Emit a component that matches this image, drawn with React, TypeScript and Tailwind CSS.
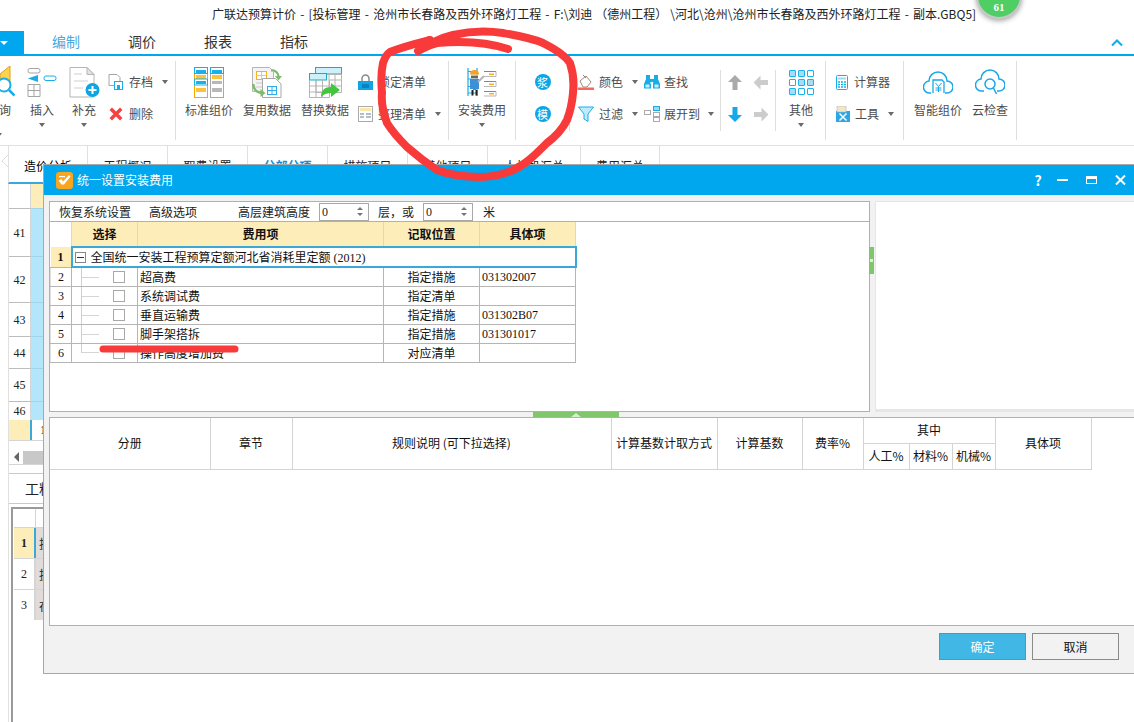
const SANS = "font-['Noto_Sans_CJK_SC',sans-serif]";

function Caret({ className = "" }: { className?: string }) {
  return <span className={`inline-block w-0 h-0 border-x-[3.500px] border-x-transparent border-t-[4px] border-t-[#6a6a6a] ${className}`} />;
}

function BigButton({ label, icon, caret, className = "" }: { label: string; icon: React.ReactNode; caret?: boolean; className?: string }) {
  return (
    <div className={`flex flex-col items-center shrink-0 pt-[9px] ${className}`}>
      <div className="h-[34px] flex items-center justify-center">{icon}</div>
      <div className="mt-[3px] h-[16px] leading-[16px] text-[12px] text-[#4d4d4d] whitespace-nowrap">{label}</div>
      {caret && <Caret className="mt-[5px]" />}
    </div>
  );
}

function SmallButton({ label, icon, caret, gap = "gap-[5px]" }: { label: string; icon: React.ReactNode; caret?: boolean; gap?: string }) {
  return (
    <div className={`h-[20px] flex items-center whitespace-nowrap text-[12px] text-[#4d4d4d] ${gap}`}>
      {icon}
      <span>{label}</span>
      {caret && <Caret className="ml-[4px]" />}
    </div>
  );
}

function Column({ className = "", children }: { className?: string; children: React.ReactNode }) {
  return <div className={`flex flex-col gap-[12px] pt-[16px] shrink-0 ${className}`}>{children}</div>;
}

function Sep({ short }: { short?: boolean }) {
  return <div className={`w-px shrink-0 bg-[#dedede] ${short ? "mt-[14px] h-[61px]" : "mt-[5px] h-[79px]"}`} />;
}

const StandardIcon = (
  <svg width="30" height="31" viewBox="0 0 30 31" fill="none">
    <rect x=".5" y=".5" width="13" height="30" fill="#fff" stroke="#f5a800" />
    <rect x=".5" y=".5" width="13" height="6" fill="#fff" stroke="#16b1e8" />
    <rect x="2" y="3" width="10" height="3" fill="#16b1e8" />
    <rect x="2" y="8" width="10" height="4" fill="#fbc23c" />
    <rect x=".5" y="12" width="13" height="6" fill="#fff" stroke="#16b1e8" />
    <rect x="2" y="14" width="10" height="3" fill="#16b1e8" />
    <rect x="2" y="21" width="10" height="4" fill="#fbc23c" />
    <rect x="16.5" y=".5" width="13" height="30" fill="#fff" stroke="#a8a8a8" />
    <rect x="16.5" y=".5" width="13" height="6" fill="#fff" stroke="#16b1e8" />
    <rect x="18" y="3" width="10" height="3" fill="#16b1e8" />
    <rect x="18" y="8" width="10" height="4" fill="#fbc23c" />
    <rect x="18" y="14" width="10" height="3" fill="#b8b8b8" />
    <rect x="18" y="21" width="10" height="4" fill="#b8b8b8" />
  </svg>
);

const ReuseIcon = (
  <svg width="30" height="31" viewBox="0 0 30 31" fill="none">
    <path d="M.5.5h17l4 4v20H.5z" fill="#f4f4f4" stroke="#b5b5b5" />
    <rect x="4.5" y="4.5" width="10" height="8" fill="#fff" stroke="#f5b21c" />
    <path d="M9.5 4.5v8M4.5 8.5h10M4 16h10M4 20h10" stroke="#c9c9c9" />
    <path d="M10.500 11.500h13l5.500 5.500v13.500H10.500z" fill="#fff" stroke="#a8a8a8" />
    <rect x="15.500" y="19.500" width="9" height="8" fill="#fff" stroke="#2eaee8" />
    <path d="M20 19.500v8M15.500 23.500h9" stroke="#2eaee8" />
    <path d="M20 2c5 0 8 3 8.500 7H31l-3.500 4.500L24 9h2.300C26 6.500 24 4.500 20 4.500z" fill="#7dbd6a" transform="translate(-1,0)" />
    <path d="M0 17h2.500c.5 5 3 7 6 7.500V22l5 4-5 4v-3C4 26.500.5 23 0 17z" fill="#7dbd6a" />
  </svg>
);

const ReplaceIcon = (
  <svg width="33" height="31" viewBox="0 0 33 31" fill="none">
    <rect x="6.500" y=".5" width="26" height="6.500" fill="#cdf1fa" stroke="#17aec3" />
    <path d="M7 7.500h25.500v18H7z" fill="#fff" stroke="#b5b5b5" />
    <rect x=".5" y="6.500" width="17" height="6.500" fill="#cdf1fa" stroke="#17aec3" />
    <path d="M.5 13v17.500h20V13M7 13v17M13.500 13v17M.5 19h20M.5 25h20M20 7v18M26 7v18M20 13h12M20 19h12" stroke="#b5b5b5" />
    <path d="M12 30c0-7 4-10 10-10v-4l9 7-9 7v-4c-4 0-7 1-10 4z" fill="#43c63c" />
  </svg>
);

const WorkerIcon = (
  <svg width="30" height="29" viewBox="0 0 30 29" fill="none">
    <path d="M1 0v28M10 0v28M1 3.500h9M1 11h9M1 18.500h9M1 25h9" stroke="#17aee8" strokeWidth="1.200" />
    <path d="M17 3h12v1H17zM17 13h12v1H17zM17 23h12v1H17z" fill="#17aee8" />
    <path d="M17 8.500h12V3.500M17 18.500h12V13.500M17 28h12V23.500" stroke="#b8b8b8" />
    <path d="M22 5.500h5v1.500h-5zM22 15.500h5v1.500h-5zM22 25h5v1.500h-5z" fill="#f5b21c" />
    <path d="M3 6.500C3 3 5 2 7.500 2S12 3 12 6.500z" fill="#f5a321" />
    <rect x="4" y="6.500" width="7" height="4" fill="#e0b090" />
    <rect x="4" y="8" width="7" height="2" fill="#666" />
    <path d="M3 11h9v10H9v1H6v-1H3z" fill="#3d90d8" />
    <rect x="4.500" y="22" width="2" height="5.500" fill="#222" />
    <rect x="8.500" y="22" width="2" height="5.500" fill="#222" />
    <path d="M11 14l6-6" stroke="#b5b5b5" strokeWidth="2" />
  </svg>
);

const GridIcon = (
  <div className="grid grid-cols-3 gap-[2px] w-[25px]">
    {Array.from({ length: 9 }).map((_, i) => (
      <div key={i} className={`h-[7px] rounded-[1px] border border-[#18b2ee] ${[0, 1, 4, 5, 6].includes(i) ? "bg-[#a8dcf5]" : "bg-white"}`} />
    ))}
  </div>
);

function Arrow({ dir, color }: { dir: "up" | "down" | "left" | "right"; color: string }) {
  const rot = { up: 0, right: 90, down: 180, left: 270 }[dir];
  return (
    <svg width="14" height="15" viewBox="0 0 14 15">
      <path d="M7 0l7 7H9.500v8h-5V7H0z" fill={color} transform={`rotate(${rot} 7 7.500)`} />
    </svg>
  );
}

function Ribbon() {
  return (
    <div className="h-[90px] flex border-b border-b-[#e0e0e0] overflow-hidden">
      {/* first group is cut off at the window edge */}
      <div className="w-[15px] shrink-0 overflow-hidden relative pt-[9px]">
        <svg width="16" height="34" viewBox="0 0 16 34" fill="none">
          <path d="M0 9L10 1v16H0z" fill="#ffd24d" stroke="#d7a21e" />
          <circle cx="4" cy="20" r="6.500" fill="#fff" stroke="#17aee8" strokeWidth="2" />
          <path d="M9 25l5.500 5.500" stroke="#17aee8" strokeWidth="2.500" />
        </svg>
        <div className="mt-[3px] h-[16px] leading-[16px] text-[12px] text-[#4d4d4d] -ml-[1px]">询</div>
        <Caret className="mt-[5px] -ml-[4px] block" />
      </div>
      <BigButton
        className="w-[32px] ml-[11px]"
        label="插入"
        caret
        icon={
          <svg width="30" height="29" viewBox="0 0 30 29" fill="none">
            <rect x="1" y=".5" width="12" height="4.500" rx="2" stroke="#a5a5a5" />
            <path d="M4 10.500h6v-2l-6 2 6 2v-2" stroke="#17aee8" strokeWidth="2" />
            <rect x="17" y="8" width="12" height="4.500" rx="2" fill="#fff" stroke="#17aee8" />
            <path d="M1 16.500h12v12H1zM1 22.500h12M7 16.500v12" stroke="#a5a5a5" />
          </svg>
        }
      />
      <BigButton
        className="w-[36px] ml-[8px]"
        label="补充"
        caret
        icon={
          <svg width="31" height="31" viewBox="0 0 31 31" fill="none">
            <path d="M1 .5h17l7 7v22.500H1z" fill="#fff" stroke="#b5b5b5" />
            <path d="M18 .5v7h7z" fill="#e2e2e2" stroke="#b5b5b5" />
            <path d="M5 7h8M5 14h14M5 21h9" stroke="#e0e0e0" strokeWidth="1.500" />
            <circle cx="23.500" cy="23" r="7" fill="#0ea5e4" />
            <path d="M23.500 19v8M19.500 23h8" stroke="#fff" strokeWidth="2" />
          </svg>
        }
      />
      <Column className="w-[67px] ml-[6px]">
        <SmallButton
          label="存档"
          caret
          icon={
            <svg width="16" height="16" viewBox="0 0 16 16" fill="none">
              <path d="M1 .5h8l3 3v8H1z" stroke="#a5a5a5" fill="#fff" />
              <rect x="6.500" y="7.500" width="8" height="8" fill="#fff" stroke="#17aee8" />
              <rect x="9" y="11" width="3" height="4" fill="#17aee8" />
            </svg>
          }
        />
        <SmallButton
          label="删除"
          icon={
            <svg width="16" height="14" viewBox="0 0 12 12">
              <path d="M1.500 1.500l9 9M10.500 1.500l-9 9" stroke="#f44242" strokeWidth="3" />
            </svg>
          }
        />
      </Column>
      <Sep />
      <BigButton className="w-[48px] ml-[9px]" label="标准组价" icon={StandardIcon} />
      <BigButton className="w-[48px] ml-[10px]" label="复用数据" icon={ReuseIcon} />
      <BigButton className="w-[48px] ml-[10px]" label="替换数据" icon={ReplaceIcon} />
      <Column className="w-[90px] ml-[9px]">
        <SmallButton
          label="锁定清单"
          icon={
            <svg width="15" height="17" viewBox="0 0 15 17" fill="none">
              <path d="M4 7V4.500a3.500 3.500 0 017 0V7" stroke="#8a8a8a" strokeWidth="1.500" />
              <rect y="7" width="15" height="9" fill="#0ea5e4" />
              <path d="M4 11h7M4 13h7" stroke="#075f9a" />
            </svg>
          }
        />
        <SmallButton
          label="整理清单"
          caret
          icon={
            <svg width="15" height="16" viewBox="0 0 15 16" fill="none">
              <rect x=".5" y=".5" width="14" height="15" fill="#fff" stroke="#aaa" />
              <rect x="2" y="2" width="11" height="3" fill="#fde7a8" />
              <path d="M2 8h4M2 11h4M8 8h5M8 11h5" stroke="#9ab" strokeWidth="1.500" />
            </svg>
          }
        />
      </Column>
      <Sep />
      <BigButton className="w-[66px]" label="安装费用" caret icon={WorkerIcon} />
      <Sep />
      <Column className="w-[53px] items-center">
        <div className="h-[20px] flex items-center">
          <div className="size-[16px] rounded-full bg-[#0ea5e4] text-white text-[11px] leading-[16px] text-center">浆</div>
        </div>
        <div className="h-[20px] flex items-center">
          <div className="size-[16px] rounded-full bg-[#0ea5e4] text-white text-[11px] leading-[16px] text-center">模</div>
        </div>
      </Column>
      <Sep short />
      <Column className="w-[66px] ml-[8px]">
        <SmallButton
          label="颜色"
          caret
          icon={
            <svg width="16" height="16" viewBox="0 0 16 16" fill="none">
              <path d="M2 7l6-5 5 6-4 5H5z" fill="#fff" stroke="#a08a78" />
              <path d="M5 1l3 3" stroke="#a08a78" />
              <rect y="13.500" width="16" height="2.500" fill="#f5685c" />
            </svg>
          }
        />
        <SmallButton
          label="过滤"
          caret
          icon={
            <svg width="16" height="16" viewBox="0 0 16 16" fill="none">
              <path d="M.5 1h15L10 8v7.500L6 13V8z" fill="#bfeafb" stroke="#17aee8" />
            </svg>
          }
        />
      </Column>
      <Column className="w-[76px]">
        <SmallButton
          label="查找"
          gap="gap-[4px]"
          icon={
            <svg width="16" height="14" viewBox="0 0 16 14" fill="#17aee8">
              <rect x="2" width="4" height="4" />
              <rect x="10" width="4" height="4" />
              <rect x="6" y="4" width="4" height="3" />
              <path d="M2 4h4.500v5H7v4.500H0V9z" />
              <path d="M9.500 4H14l2 5v4.500H9V9z" />
              <rect x="1.500" y="9.500" width="4" height="3" fill="#c8eefc" />
              <rect x="10.500" y="9.500" width="4" height="3" fill="#c8eefc" />
            </svg>
          }
        />
        <SmallButton
          label="展开到"
          gap="gap-[4px]"
          caret
          icon={
            <svg width="16" height="16" viewBox="0 0 16 16" fill="none">
              <rect x=".5" y="4.500" width="6" height="4" stroke="#aaa" />
              <rect x="9.500" y=".5" width="6" height="4" fill="#9fd8f2" stroke="#17aee8" />
              <rect x="9.500" y="6.500" width="6" height="4" stroke="#aaa" />
              <rect x="9.500" y="11.500" width="6" height="4" stroke="#aaa" />
            </svg>
          }
        />
      </Column>
      <Sep short />
      <div className="w-[54px] shrink-0 pt-[16px] pl-[7px] grid grid-cols-[26px_14px] grid-rows-[20px_20px] gap-y-[12px] content-start items-center">
        <Arrow dir="up" color="#aaaaaa" />
        <Arrow dir="left" color="#cccccc" />
        <Arrow dir="down" color="#14a9ea" />
        <Arrow dir="right" color="#cccccc" />
      </div>
      <Sep short />
      <BigButton className="w-[49px] pl-[1px]" label="其他" caret icon={GridIcon} />
      <Sep />
      <Column className="w-[77px] pl-[10px]">
        <SmallButton
          label="计算器"
          gap="gap-[6px]"
          icon={
            <svg width="12" height="15" viewBox="0 0 12 15" fill="none">
              <rect x=".5" y=".5" width="11" height="14" rx="1" stroke="#17aee8" />
              <rect x="2" y="2.500" width="8" height="2" fill="#9fd8f2" />
              <path d="M2 7h2M5 7h2M8 7h2M2 9.500h2M5 9.500h2M8 9.500h2M2 12h2M5 12h2M8 12h2" stroke="#17aee8" strokeWidth="1.300" />
            </svg>
          }
        />
        <SmallButton
          label="工具"
          caret
          gap="gap-[5px]"
          icon={
            <svg width="14" height="16" viewBox="0 0 14 16">
              <rect y="5" width="14" height="11" fill="#2ba7e4" />
              <rect x="1" width="9" height="6" fill="#f2e6c8" stroke="#b5b5b5" strokeWidth=".6" />
              <path d="M3.500 7.500l7 7M10.500 7.500l-7 7" stroke="#fff" strokeWidth="1.500" />
            </svg>
          }
        />
      </Column>
      <Sep />
      <BigButton
        className="w-[48px] ml-[10px]"
        label="智能组价"
        icon={
          <svg width="30" height="26" viewBox="0 0 30 26" fill="none">
            <path d="M8 24H7a6 6 0 01-1-12 9 9 0 0118 0 6 6 0 010 12h-2" stroke="#18a8e8" strokeWidth="1.500" />
            <path d="M10 24V11h9l2 2v11" stroke="#18a8e8" strokeWidth="1.300" />
            <path d="M12.500 14l3 3.500 3-3.500M15.500 17.500V23M12.500 19h6M12.500 21h6" stroke="#18a8e8" />
          </svg>
        }
      />
      <BigButton
        className="w-[36px] ml-[10px]"
        label="云检查"
        icon={
          <svg width="30" height="26" viewBox="0 0 30 26" fill="none">
            <path d="M9 22H7a6 6 0 01-1-12 9 9 0 0118 0 6 6 0 010 12h-2" stroke="#18a8e8" strokeWidth="1.500" />
            <circle cx="15" cy="15" r="5" stroke="#18a8e8" strokeWidth="1.500" />
            <path d="M18.500 19l3 6" stroke="#18a8e8" strokeWidth="1.500" />
          </svg>
        }
      />
      <div className="ml-[8px]"><Sep /></div>
    </div>
  );
}

function PageTabs() {
  const tabs = [
    { label: "工程概况", w: "w-[80px]" },
    { label: "取费设置", w: "w-[80px]" },
    { label: "分部分项", w: "w-[80px]", active: true },
    { label: "措施项目", w: "w-[80px]" },
    { label: "其他项目", w: "w-[80px]" },
    { label: "人材机汇总", w: "w-[93px]" },
    { label: "费用汇总", w: "w-[79px]" },
  ];
  return (
    <div className="h-[38px] flex">
      <svg className="shrink-0" width="8" height="38" viewBox="0 0 8 38" fill="none">
        <path d="M8 9L2 15l6 6" stroke="#dedede" />
      </svg>
      <div className="w-[80px] shrink-0 h-[38px] border-l border-l-[#e0e0e0] border-b-2 border-b-[#3aa9d9] border-r border-r-[#e0e0e0] pl-[15px] pt-[11px] text-[12px] leading-[18px] text-black">造价分析</div>
      {tabs.map((t) => (
        <div key={t.label} className={`${t.w} shrink-0 h-[36px] border-r border-r-[#e0e0e0] pt-[11px] text-center text-[12px] leading-[18px] ${t.active ? "text-[#0f8fe0] font-bold" : "text-[#222]"}`}>
          {t.label}
        </div>
      ))}
    </div>
  );
}

function LeftPane() {
  const rows = [
    { n: "41", h: "h-[48px]" },
    { n: "42", h: "h-[46px]" },
    { n: "43", h: "h-[34px]" },
    { n: "44", h: "h-[32px]" },
    { n: "45", h: "h-[33px]" },
    { n: "46", h: "h-[19px]" },
  ];
  const lower = [
    { n: "1", ch: "投", active: true },
    { n: "2", ch: "投" },
    { n: "3", ch: "在" },
  ];
  return (
    <div className="ml-[8px] w-[200px] border-l border-l-[#e0e0e0] font-['Liberation_Serif',serif] text-[12px] text-[#222]">
      <div className="h-[24px] flex">
        <div className="w-[22px] border-r border-r-[#d5d5d5]" />
        <div className="w-[20px] bg-[#fdeeb9]" />
      </div>
      {rows.map((r) => (
        <div key={r.n} className={`${r.h} flex`}>
          <div className="w-[22px] border-t border-t-[#bdbdbd] border-r border-r-[#d5d5d5] flex items-center justify-center">{r.n}</div>
          <div className="w-[20px] bg-[#b3e5fb] border-t border-t-[#9fd4ea]" />
        </div>
      ))}
      <div className="h-[20px] flex">
        <div className="w-[21px] bg-[#fdeeb9]" />
        <div className="w-[2px] bg-[#3aa9d9]" />
        <div className="pl-[8px] leading-[20px]">1</div>
      </div>
      <div className="h-[10px] border-t border-t-[#d5d5d5]" />
      <div className="h-[15px] flex items-center border-b border-b-[#d5d5d5]">
        <div className="w-[14px] h-[14px] flex items-center justify-center">
          <span className="w-0 h-0 border-y-[5px] border-y-transparent border-r-[5px] border-r-[#666]" />
        </div>
        <div className="flex-1 h-[13px] bg-[#c8c8c8]" />
      </div>
      <div className="mt-[8px] h-[31px] border-y border-y-[#b7d9a5] pl-[16px] leading-[29px] text-[14px] text-[#222] font-['Noto_Sans_CJK_SC',sans-serif]">工料</div>
      <div className="ml-[2px] mt-[3px] h-[222px] border-l-2 border-t-2 border-[#9a9a9a] pl-px">
        <div className="h-[18px] w-[22px] border-r border-r-[#d5d5d5]" />
        {lower.map((r) => (
          <div key={r.n} className="h-[31px] flex border-t border-t-[#d5d5d5]">
            <div className={`w-[20px] flex items-center justify-center ${r.active ? "bg-[#fdeeb9] font-bold" : ""}`}>{r.n}</div>
            <div className={`w-[2px] ${r.active ? "bg-[#3aa9d9]" : "bg-[#d5d5d5]"}`} />
            <div className="flex-1 bg-[#e1dcda] pl-[3px] leading-[31px] font-['Noto_Sans_CJK_SC',sans-serif]">{r.ch}</div>
          </div>
        ))}
      </div>
    </div>
  );
}

function Spin() {
  return (
    <div className="w-[50px] h-[18px] bg-white border border-[#a8a8a8] flex items-center justify-between pl-[2px] pr-[5px] font-['Liberation_Serif',serif] text-[12px] text-[#222]">
      <span>0</span>
      <span className="flex flex-col gap-[3px]">
        <span className="w-0 h-0 border-x-[3px] border-x-transparent border-b-[3px] border-b-[#777]" />
        <span className="w-0 h-0 border-x-[3px] border-x-transparent border-t-[3px] border-t-[#777]" />
      </span>
    </div>
  );
}

function FeeRow({ n, name, pos, code, last }: { n: string; name: string; pos: string; code?: string; last?: boolean }) {
  return (
    <tr className="h-[19px]">
      <td className="border border-[#b5b5b5] border-l-[#e0e0e0] bg-white text-center font-['Liberation_Serif',serif]">{n}</td>
      <td className="border border-[#b5b5b5] border-x-[#b5b5b5] p-0">
        <div className="flex items-center h-[18px]">
          <div className={`ml-[9px] w-[18px] border-l border-l-[#cfcfcf] flex items-center ${last ? "h-[9px] self-start" : "h-[18px]"}`}>
            <div className={`w-full h-px bg-[#d5d5d5] ${last ? "mt-[8px]" : ""}`} />
          </div>
          <div className="ml-[14px] size-[12px] border border-[#a8a8a8] bg-white" />
        </div>
      </td>
      <td className="border border-[#b5b5b5] pl-[2px]">{name}</td>
      <td className="border border-[#b5b5b5] text-center">{pos}</td>
      <td className="border border-[#b5b5b5] pl-[2px] font-['Liberation_Serif',serif]">{code}</td>
    </tr>
  );
}

function UpperTable() {
  const head = "border-r border-r-[#d8d8d8] bg-[#fdeeb9] font-bold text-center";
  return (
    <table className="table-fixed border-collapse w-[525px] text-[12px] text-[#111] leading-[16px]">
      <colgroup>
        <col className="w-[21px]" />
        <col className="w-[66px]" />
        <col className="w-[246px]" />
        <col className="w-[96px]" />
        <col className="w-[96px]" />
      </colgroup>
      <tbody>
        <tr className="h-[25px]">
          <td className="border-r border-r-[#d8d8d8]" />
          <td className={head}>选择</td>
          <td className={head}>费用项</td>
          <td className={head}>记取位置</td>
          <td className={head}>具体项</td>
        </tr>
        <tr className="h-[20px]">
          <td className="bg-[#fdeeb9] text-center font-bold font-['Liberation_Serif',serif]">1</td>
          <td colSpan={4} className="border-2 border-[#3aa9d9] p-0">
            <div className="flex items-center h-[16px]">
              <div className="ml-[2px] size-[11px] border border-[#888] flex items-center justify-center">
                <div className="w-[7px] h-px bg-[#333]" />
              </div>
              <span className="ml-[5px]">全国统一安装工程预算定额河北省消耗里定额<span className="font-['Liberation_Serif',serif]"> (2012)</span></span>
            </div>
          </td>
        </tr>
        <FeeRow n="2" name="超高费" pos="指定措施" code="031302007" />
        <FeeRow n="3" name="系统调试费" pos="指定清单" />
        <FeeRow n="4" name="垂直运输费" pos="指定措施" code="031302B07" />
        <FeeRow n="5" name="脚手架搭拆" pos="指定措施" code="031301017" />
        <FeeRow n="6" name="操作高度增加费" pos="对应清单" last />
      </tbody>
    </table>
  );
}

function LowerTable() {
  const c = "border border-[#d4d4d4] text-center";
  return (
    <table className="table-fixed border-collapse w-[1041px] text-[12px] text-[#111] leading-[16px]">
      <colgroup>
        <col className="w-[160px]" />
        <col className="w-[82px]" />
        <col className="w-[319px]" />
        <col className="w-[106px]" />
        <col className="w-[85px]" />
        <col className="w-[61px]" />
        <col className="w-[46px]" />
        <col className="w-[43px]" />
        <col className="w-[43px]" />
        <col className="w-[96px]" />
      </colgroup>
      <tbody>
        <tr className="h-[25px]">
          <td rowSpan={2} className={`${c} border-l-0 border-t-0`}>分册</td>
          <td rowSpan={2} className={`${c} border-t-0`}>章节</td>
          <td rowSpan={2} className={`${c} border-t-0`}>规则说明 (可下拉选择)</td>
          <td rowSpan={2} className={`${c} border-t-0`}>计算基数计取方式</td>
          <td rowSpan={2} className={`${c} border-t-0`}>计算基数</td>
          <td rowSpan={2} className={`${c} border-t-0`}>费率%</td>
          <td colSpan={3} className={`${c} border-t-0`}>其中</td>
          <td rowSpan={2} className={`${c} border-t-0`}>具体项</td>
        </tr>
        <tr className="h-[26px]">
          <td className={c}>人工%</td>
          <td className={c}>材料%</td>
          <td className={c}>机械%</td>
        </tr>
      </tbody>
    </table>
  );
}

function InstallDialog() {
  return (
    <div className="absolute left-[43px] top-[164px] w-[1100px] h-[510px] z-10 border border-[#a8a8a8] bg-[#f2f2f2] flex flex-col">
      <div className="h-[30px] shrink-0 bg-[#00a7ee] flex items-center text-white text-[12px]">
        <svg className="ml-[12px]" width="17" height="17" viewBox="0 0 17 17">
          <rect width="17" height="17" rx="3" fill="#f8a51f" />
          <path d="M2.500 8.500l3-1.500 1.500 2.500 6-6.500 1.500 1.500-6.500 8H5.500zM3 4h6v1.200H3z" fill="#fff" />
        </svg>
        <span className="ml-[4px]">统一设置安装费用</span>
        <div className="ml-[859px] flex items-center">
          <span className="w-[12px] text-center text-[14px] font-bold leading-none">?</span>
          <span className="ml-[13px] w-[11px] h-[2px] bg-white" />
          <span className="ml-[18px] w-[11px] h-[8px] border border-white border-t-[3px]" />
          <svg className="ml-[18px]" width="11" height="10" viewBox="0 0 11 10">
            <path d="M1 .5l9 9M10 .5l-9 9" stroke="#fff" strokeWidth="2" />
          </svg>
        </div>
      </div>
      <div className="flex h-[211px] shrink-0 mt-[6px] ml-[5px]">
        <div className="w-[821px] shrink-0 border border-[#b0b0b0] bg-white">
          <div className="h-[20px] flex items-center text-[12px] text-[#222] border-b border-b-[#b0b0b0]">
            <span className="ml-[9px]">恢复系统设置</span>
            <span className="ml-[18px]">高级选项</span>
            <span className="ml-[41px]">高层建筑高度</span>
            <div className="ml-[9px]"><Spin /></div>
            <span className="ml-[9px]">层，或</span>
            <div className="ml-[9px]"><Spin /></div>
            <span className="ml-[10px]">米</span>
          </div>
          <UpperTable />
        </div>
        <div className="w-[5px] shrink-0 flex items-start pt-[46px] -ml-px">
          <div className="w-[5px] h-[27px] bg-[#7fc66c] flex items-center justify-center">
            <span className="size-[3px] bg-[#dff2da]" />
          </div>
        </div>
        <div className="flex-1 ml-px bg-white border-l border-t border-[#e6e6e6] border-b-[3px]" />
      </div>
      <div className="h-[5px] shrink-0 ml-[489px] w-[86px] bg-[#7fc66c] flex justify-center items-center">
        <span className="w-0 h-0 border-x-[5px] border-x-transparent border-b-[4px] border-b-[#d5efd0]" />
      </div>
      <div className="h-[209px] shrink-0 ml-[5px] border border-[#b0b0b0] bg-white">
        <LowerTable />
      </div>
      <div className="flex ml-[895px] mt-[7px] gap-[6px] text-[12px]">
        <div className="w-[87px] h-[27px] bg-[#41b7e6] border border-[#2ea3d8] text-white flex items-center justify-center">确定</div>
        <div className="w-[87px] h-[27px] border border-[#8a8a8a] text-[#111] flex items-center justify-center">取消</div>
      </div>
    </div>
  );
}

export default function App() {
  return (
    <div className={`relative w-[1134px] h-[722px] overflow-hidden bg-white ${SANS}`}>
      <div className="h-[30px] pl-[212px] pt-[6px] text-[12px] leading-[16px] text-[#222] whitespace-nowrap [word-spacing:1.500px]">
        广联达预算计价 - [投标管理 - 沧州市长春路及西外环路灯工程 - F:\刘迪<span className="mx-[3px]">（德州工程）</span>\河北\沧州\沧州市长春路及西外环路灯工程 - 副本.GBQ5]
      </div>
      {/* score badge hanging off the window top */}
      <div className="absolute left-[976px] top-[-27px] size-[46px] rounded-full bg-[#4fce64] border-2 border-[#c8c8c8] shadow-[0_2px_5px_rgba(0,0,0,0.35)] flex items-end justify-center pb-[3px] text-white font-bold text-[11px] leading-[14px] font-['Liberation_Serif',serif]">61</div>

      <div className="h-[26px] flex border-b-2 border-b-[#00a7ee] text-[14px] text-[#333]">
        <div className="w-[24px] h-[23px] mt-px bg-[#00a7ee] flex items-center">
          <span className="w-0 h-0 border-x-[4px] border-x-transparent border-t-[4px] border-t-white" />
        </div>
        <div className="ml-[4px] w-[76px] text-center leading-[22px] text-[#4aa8e0] border-b-2 border-b-[#00a7ee] -mb-[2px]">编制</div>
        <div className="w-[76px] text-center leading-[22px]">调价</div>
        <div className="w-[76px] text-center leading-[22px]">报表</div>
        <div className="w-[76px] text-center leading-[22px]">指标</div>
        <svg className="ml-[779px] mt-[9px]" width="12" height="8" viewBox="0 0 12 8" fill="none">
          <path d="M1 6.500l5-5 5 5" stroke="#14a9ea" strokeWidth="2" />
        </svg>
      </div>

      <Ribbon />
      <PageTabs />
      <LeftPane />
      <InstallDialog />

      {/* hand-drawn red marks on top of the screenshot */}
      <svg className="absolute left-0 top-0 z-20 pointer-events-none" width="1134" height="722" fill="none">
        <path
          d="M508 49C490 43 470 40 437 43C428 45 424 48 418 51C430 44 440 38 453 35C470 31 490 31 503 33C520 36 532 38 543 43C555 49 565 55 570 63C574 75 574 85 573 93C572 105 570 112 567 120C562 130 555 137 547 143C535 155 525 165 513 170C502 175 492 177 480 177C465 177 450 175 437 170C425 162 416 155 407 147C398 138 392 131 387 123C383 112 381 103 382 93C381 82 381 72 383 63C385 57 387 54 390 52C405 46 418 43 430 40"
          stroke="#f83a3a"
          strokeWidth="8"
          strokeLinecap="round"
          strokeLinejoin="round"
        />
        <path d="M103 349H235" stroke="#f83a3a" strokeWidth="7" strokeLinecap="round" />
      </svg>
    </div>
  );
}
